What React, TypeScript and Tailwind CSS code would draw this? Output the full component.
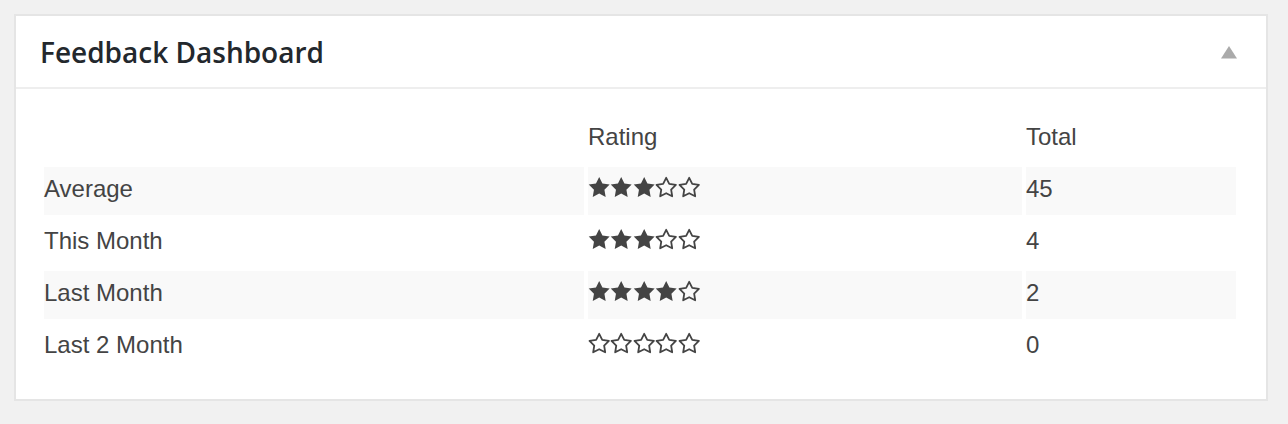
import React from "react";

const FILLED_PTS =
  "11.2,1 14.43,7.55 21.66,8.6 16.43,13.7 17.67,20.9 11.2,17.5 4.73,20.9 5.97,13.7 0.74,8.6 7.97,7.55";
const EMPTY_PTS =
  "11.2,1.8 14.26,7.79 20.9,8.85 16.15,13.61 17.2,20.25 11.2,17.2 5.2,20.25 6.25,13.61 1.5,8.85 8.14,7.79";

function Stars({ n }: { n: number }) {
  return (
    <div className="flex mt-px">
      {[0, 1, 2, 3, 4].map((i) => (
        <svg key={i} viewBox="0 0 22.4 22.4" className="w-[22.4px] h-[22.4px] shrink-0">
          {i < n ? (
            <polygon points={FILLED_PTS} fill="#444" />
          ) : (
            <polygon
              points={EMPTY_PTS}
              fill="none"
              stroke="#444"
              strokeWidth="1.8"
              strokeLinejoin="round"
            />
          )}
        </svg>
      ))}
    </div>
  );
}

const rows = [
  { label: "Average", stars: 3, total: "45" },
  { label: "This Month", stars: 3, total: "4" },
  { label: "Last Month", stars: 4, total: "2" },
  { label: "Last 2 Month", stars: 0, total: "0" },
];

export default function App() {
  return (
    <div className="min-h-[424px] bg-[#f1f1f1] pt-[14px] pl-[14px]">
      <div className="w-[1254px] bg-white border-2 border-[#e5e5e5]">
        <div className="h-[73px] flex items-center justify-between border-b-2 border-[#eeeeee] pl-[24px] pr-[29px]">
          <h2
            className="text-[28px] font-semibold text-[#23282d]"
            style={{ fontFamily: '"Open Sans", sans-serif' }}
          >
            Feedback Dashboard
          </h2>
          <svg width="16" height="13" viewBox="0 0 16 13" className="mt-[2px]">
            <polygon points="8,0 16,12.5 0,12.5" fill="#aaaaaa" />
          </svg>
        </div>
        <div className="pt-[22px] pb-[24px] pl-[24px]">
          <table
            className="table-fixed border-separate border-spacing-1 w-[1200px] text-[24px] text-[#444]"
            style={{ fontFamily: '"Liberation Sans", Arial, sans-serif' }}
          >
            <colgroup>
              <col className="w-[540px]" />
              <col className="w-[434px]" />
              <col className="w-[210px]" />
            </colgroup>
            <thead>
              <tr>
                <th className="h-[48px] p-0 pt-[8px] align-top text-left font-normal leading-[27px]"></th>
                <th className="h-[48px] p-0 pt-[8px] align-top text-left font-normal leading-[27px]">Rating</th>
                <th className="h-[48px] p-0 pt-[8px] align-top text-left font-normal leading-[27px]">Total</th>
              </tr>
            </thead>
            <tbody>
              {rows.map((r, i) => {
                const bg = i % 2 === 0 ? "bg-[#f9f9f9]" : "bg-white";
                return (
                  <tr key={r.label}>
                    <td className={`h-[48px] p-0 pt-[8px] align-top leading-[27px] ${bg}`}>{r.label}</td>
                    <td className={`h-[48px] p-0 pt-[8px] align-top leading-[27px] ${bg}`}>
                      <Stars n={r.stars} />
                    </td>
                    <td className={`h-[48px] p-0 pt-[8px] align-top leading-[27px] ${bg}`}>{r.total}</td>
                  </tr>
                );
              })}
            </tbody>
          </table>
        </div>
      </div>
    </div>
  );
}
